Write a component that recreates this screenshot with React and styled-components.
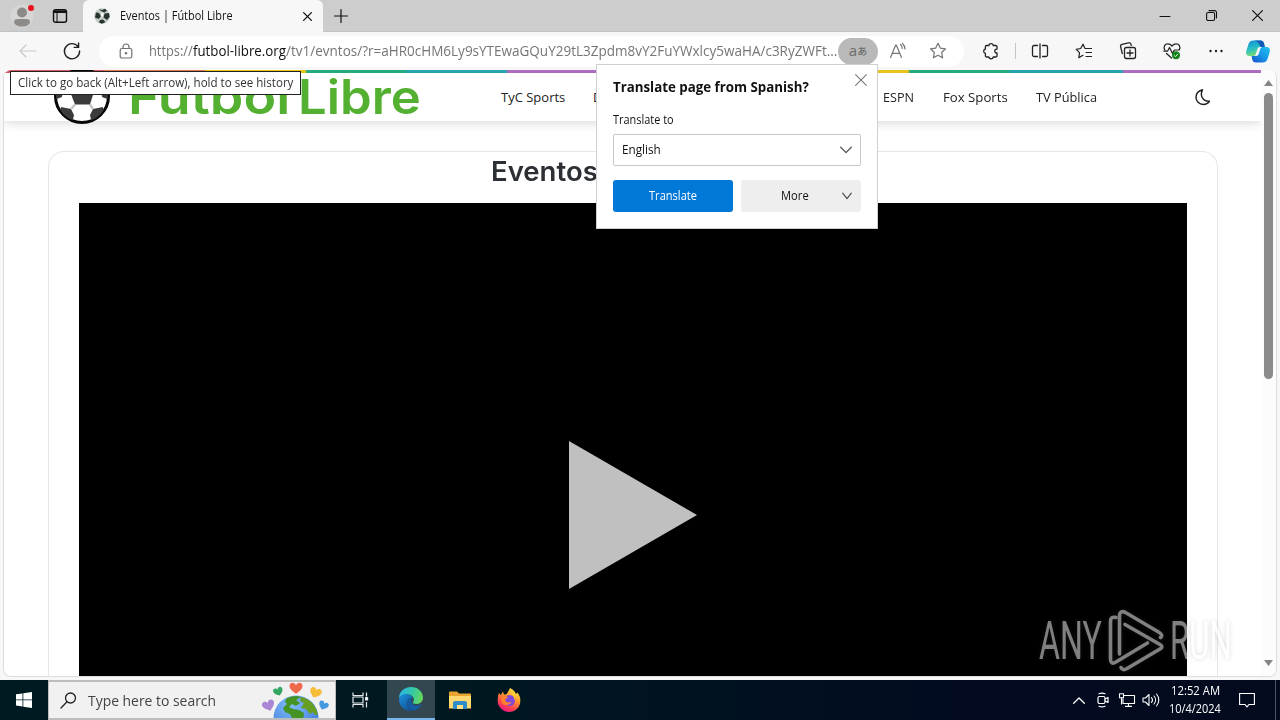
import React, { useLayoutEffect, useRef, useState } from "react";
import styled, { createGlobalStyle } from "styled-components";

const Global = createGlobalStyle`
  * { box-sizing: border-box; }
  html, body { margin: 0; padding: 0; overflow: hidden; }
  body { font-family: "Open Sans", "Noto Sans", sans-serif; font-size: 12px; color: #111; }
  svg { display: block; flex: none; overflow: visible; }
`;

/* ---------- text fitted to a set width ---------- */
const FitBox = styled.span`
  display: block;
  flex: none;
  width: ${(p) => p.$w}px;
  font-size: ${(p) => p.$size || 12}px;
  font-weight: ${(p) => p.$weight || 400};
  font-family: ${(p) => p.$family || "inherit"};
  color: ${(p) => p.$color || "inherit"};
  white-space: pre;
  line-height: 1.36;
`;
const FitInner = styled.span`
  display: inline-block;
  transform-origin: 0 50%;
`;
function Fit({ w, size, weight, family, color, children }) {
  const ref = useRef(null);
  const [scale, setScale] = useState(1);
  useLayoutEffect(() => {
    setScale(w / ref.current.offsetWidth);
  }, [w]);
  return (
    <FitBox $w={w} $size={size} $weight={weight} $family={family} $color={color}>
      <FitInner ref={ref} style={{ transform: `scaleX(${scale})` }}>{children}</FitInner>
    </FitBox>
  );
}

/* ---------- frame ---------- */
const Screen = styled.div`
  position: relative;
  width: 1280px;
  height: 720px;
  display: flex;
  flex-direction: column;
  background: #f7f7f7;
  overflow: hidden;
`;
const TitleBar = styled.div`
  height: 32px;
  flex: none;
  display: flex;
  background: #cdcdcd;
  border-bottom: 1px solid #c2c2c2;
`;
const Slot = styled.div`
  width: ${(p) => p.$w}px;
  height: 100%;
  flex: none;
  display: flex;
  align-items: center;
  justify-content: center;
`;
const Tab = styled.div`
  width: 240px;
  height: 32px;
  margin-left: 1px;
  flex: none;
  display: flex;
  align-items: center;
  padding: 0 11px 0 11px;
  background: #f7f7f7;
  border-radius: 6px 6px 0 0;
  gap: 10px;
`;
const Grow = styled.div`
  flex: 1;
`;
const ToolBar = styled.div`
  height: 38px;
  flex: none;
  display: flex;
  align-items: center;
  background: #f7f7f7;
  padding: 0 0 0 6px;
`;
const Address = styled.div`
  width: 865px;
  height: 31px;
  margin-left: 5px;
  flex: none;
  display: flex;
  align-items: center;
  border-radius: 16px;
  background: #fff;
  padding-left: 20px;
`;
const Url = styled.div`
  width: 689px;
  margin-left: 16px;
  display: flex;
  flex: none;
`;
const TranslatePill = styled.div`
  width: 40px;
  height: 27px;
  border-radius: 14px;
  background: #b9b9b9;
  color: #6c6c6c;
  display: flex;
  align-items: center;
  justify-content: center;
  flex: none;
  line-height: 20px;
`;
const Latin = styled.span`
  font-size: 15px;
  margin-top: -2px;
`;
const Kana = styled.span`
  font-family: "Noto Sans CJK JP", sans-serif;
  font-size: 10px;
  font-weight: 500;
`;
const Divider = styled.div`
  width: 1px;
  height: 16px;
  background: #c6c6c6;
`;

/* ---------- page ---------- */
const View = styled.div`
  width: 1274px;
  height: 607px;
  margin-left: 3px;
  flex: none;
  display: flex;
  background: #fff;
  border: 1px solid #dcdcdc;
  border-top: 0;
  border-radius: 8px;
  overflow: hidden;
`;
const Site = styled.div`
  width: 1257px;
  flex: none;
  display: flex;
  flex-direction: column;
`;
const Rainbow = styled.div`
  height: 3px;
  flex: none;
  background: linear-gradient(90deg,
    #dc5b66 0 100px, #e8785a 100px 200px, #ecca18 202px 301px, #27ae83 303px 400px, #2aa6b4 404px 502px,
    #b070c4 504px 603px, #dc5b66 605px 703px, #e8785a 705px 803px, #ecc719 806px 904px, #27ae83 906px 1003px,
    #2aa6b4 1008px 1118px, #b070c4 1120px);
`;
const SiteNav = styled.div`
  height: 48px;
  flex: none;
  display: flex;
  align-items: center;
  background: #fff;
  box-shadow: 0 3px 9px rgba(0, 0, 0, 0.13);
  padding-left: 49px;
`;
const Brand = styled.div`
  display: flex;
  width: 448px;
  height: 48px;
  flex: none;
  align-items: center;
`;
const BrandBall = styled.div`
  width: 75px;
  margin-top: -2px;
`;
const BrandWord = styled.div`
  width: ${(p) => p.$w}px;
`;
const Links = styled.div`
  display: flex;
  flex: none;
  width: 694px;
  padding-top: 2px;
`;
const Link = styled.div`
  width: ${(p) => p.$w}px;
`;
const Card = styled.div`
  width: 1170px;
  flex: 1;
  margin: 30px 0 0 44px;
  border: 1px solid #e6e6e6;
  border-bottom: 0;
  border-radius: 16px 16px 0 0;
  padding: 0 30px;
  display: flex;
  flex-direction: column;
`;
const Heading = styled.h1`
  height: 51px;
  margin: 0;
  padding: 1px 0 0 412px;
  flex: none;
`;
const Video = styled.div`
  flex: 1;
  background: #000;
  display: flex;
  padding: 238px 0 0 490px;
`;
const ScrollBar = styled.div`
  flex: 1;
  background: #fcfcfc;
  display: flex;
  flex-direction: column;
  align-items: center;
  padding-top: 10px;
`;
const Thumb = styled.div`
  width: 9px;
  height: 286px;
  border-radius: 5px;
  background: #8b8b8b;
  margin: 7px 0 281px;
`;

/* ---------- overlays ---------- */
const Tooltip = styled.div`
  position: absolute;
  left: 10px;
  top: 71px;
  width: 291px;
  height: 24px;
  border: 1px solid #222;
  background: #fff;
  padding: 3px 7px;
`;
const Popup = styled.div`
  position: absolute;
  left: 596px;
  top: 64px;
  width: 282px;
  height: 165px;
  border: 1px solid #cfcfcf;
  background: #fff;
  padding: 7px 16px 0;
  display: flex;
  flex-direction: column;
`;
const PopupHead = styled.div`
  display: flex;
  justify-content: space-between;
  height: 40px;
  svg { margin: 2px -6px 0 0; }
`;
const PopupTitle = styled.div`
  padding-top: 6px;
`;
const Select = styled.div`
  height: 32px;
  margin-top: 6px;
  border: 1px solid #c6c6c6;
  border-radius: 2px;
  padding: 0 8px;
  display: flex;
  align-items: center;
  justify-content: space-between;
`;
const Actions = styled.div`
  display: flex;
  gap: 8px;
  margin-top: 14px;
`;
const Action = styled.div`
  width: 120px;
  height: 32px;
  border-radius: 3px;
  display: flex;
  align-items: center;
  padding-left: ${(p) => p.$indent}px;
  gap: 33px;
  background: ${(p) => (p.$primary ? "#0078d8" : "#eee")};
  color: ${(p) => (p.$primary ? "#fff" : "#111")};
`;
const Watermark = styled.div`
  position: absolute;
  left: 1039px;
  top: 609px;
  height: 64px;
  display: flex;
  align-items: center;
  opacity: 0.5;
  filter: drop-shadow(0 0 2px rgba(90, 90, 90, 0.45));
`;

/* ---------- taskbar ---------- */
const TaskBar = styled.div`
  height: 40px;
  flex: none;
  margin-top: 3px;
  display: flex;
  align-items: center;
  color: #fff;
  background: linear-gradient(90deg, #001a22, #001820 35%, #020b20 75%, #030a1e);
`;
const Search = styled.div`
  width: 288px;
  height: 40px;
  flex: none;
  display: flex;
  align-items: center;
  background: #f1f1f1;
  border: 1px solid #bdbdbd;
  border-width: 2px 1px;
  color: #333;
  padding-left: 11px;
  overflow: hidden;
`;
const SearchText = styled.div`
  width: 172px;
  margin-left: 11px;
`;
const ActiveApp = styled(Slot)`
  background: #32474f;
  border-bottom: 2px solid #78b5ea;
`;
const Clock = styled.div`
  width: 64px;
  height: 40px;
  display: flex;
  flex: none;
  flex-direction: column;
  align-items: center;
  justify-content: center;
  gap: 2px;
`;
const ShowDesktop = styled.div`
  width: 5px;
  height: 40px;
  border-left: 1px solid #4a5265;
`;

/* ---------- icons ---------- */
const Stroke = ({ w = 20, h = 20, c = "#222", sw = 1.2, children }) => (
  <svg width={w} height={h} viewBox={`0 0 ${w} ${h}`} fill="none" stroke={c} strokeWidth={sw} strokeLinecap="round" strokeLinejoin="round">
    {children}
  </svg>
);
const Chevron = ({ w = 12, c = "#555" }) => (
  <Stroke w={w} h={8} c={c} sw={1.3}><path d={`M.7 1.2 ${w / 2} 6.6 ${w - 0.7} 1.2`} /></Stroke>
);

const Profile = () => (
  <svg width="26" height="26" viewBox="0 0 26 26">
    <circle cx="13" cy="13" r="11.5" fill="#d8d6d5" />
    <circle cx="13" cy="9.5" r="5" fill="#8d8a88" />
    <path d="M5 19c0-3 2-3 8-3s8 0 8 3c0 2.700-3.500 4.500-8 4.500S5 21.700 5 19" fill="#8d8a88" />
    <circle cx="22" cy="5" r="3" fill="#e8101c" />
  </svg>
);
const TabActions = () => (
  <Stroke w={16} h={16} c="#111" sw={1.4}>
    <rect x="1.500" y="1.800" width="13" height="12.500" rx="2" />
    <path d="M2 3.700h12" strokeWidth="2.600" strokeLinecap="butt" /><path d="M5 4v10" strokeWidth="1" />
  </Stroke>
);
const MiniBall = () => (
  <svg width="16" height="16" viewBox="0 0 16 16">
    <circle cx="8" cy="8" r="7.800" fill="#c5ccc8" />
    <path d="M5 1 8 2l3-1.300 2 1.800-2.500 2L7 3zM2 4.500 5 5l2 3.200L4.500 11 1 9.500zM10.500 5.500 15 5l.7 4-2.700 3-3.500-2.500zM6 12l3-.500 2.500 2.500L8 15.800 5 14.500z" fill="#27352f" />
    <path d="M7 5.500 9.500 5 9 8.500 7.500 9z" fill="#fff" />
  </svg>
);
const Ball = () => (
  <svg width="58" height="58" viewBox="0 0 58 58">
    <defs><clipPath id="ballClip"><circle cx="29" cy="29" r="26" /></clipPath></defs>
    <circle cx="29" cy="29" r="26.500" fill="#fff" stroke="#050505" strokeWidth="3" />
    <g clipPath="url(#ballClip)">
      <path d="M29 16 41 24.500 37 37.500H22L17 24.500z" fill="#3b3b3b" />
      <path d="M8 40 18 42 21 48 19 57 6 54zM50 40 40 42 37 48 39 57 52 54zM2 18 10 22 9 30 1 33zM56 18 48 22 49 30 57 33z" fill="#3b3b3b" />
      <path d="M22 37.500 18 42M37 37.500 40 42M10 27 17 24M48 27 41 24" stroke="#c6c6c6" strokeWidth="2.500" />
    </g>
  </svg>
);
const Back = () => <Stroke w={18} h={14} c="#cacaca"><path d="M17 7H1.500M7 1 1 7l6 6" /></Stroke>;
const Reload = () => (
  <Stroke w={18} h={18} c="#222" sw={1.4}><path d="M15.300 5A7.600 7.600 0 1 0 16.600 9M15.600 1v4.400h-4.400" /></Stroke>
);
const Lock = () => (
  <Stroke w={14} h={16} c="#707070" sw={1.2}>
    <rect x="1.200" y="5.500" width="11.600" height="9.500" rx="1.800" />
    <path d="M4 5.500V4a3 3 0 0 1 6 0v1.500" /><circle cx="7" cy="10.200" r=".7" fill="#707070" />
  </Stroke>
);
const ReadAloud = () => (
  <Stroke w={18} h={16} c="#747474" sw={1.2}>
    <path d="M1.500 14.500 6.700 2h.6l5.200 12.500M3.300 10.300h7.400M11.500 1.500a5 5 0 0 1 1.700 4M13.500.5A8 8 0 0 1 16 6" />
  </Stroke>
);
const starPath = "M9 1.300 11.300 6.100 16.500 6.800 12.700 10.500 13.600 15.800 9 13.300 4.400 15.800 5.300 10.500 1.500 6.800 6.700 6.100z";
const Star = () => <Stroke w={18} h={18} c="#747474"><path d={starPath} /></Stroke>;
const Puzzle = () => (
  <Stroke w={18} h={18} sw={1.300}>
    <path d="M4.600 3.500h2.200a2.300 2.300 0 0 1 4.500 0h2.500a1.200 1.200 0 0 1 1.200 1.200v2.500h-.3a1.900 1.900 0 0 0 0 3.800h.3v2.800a1.200 1.200 0 0 1-1.200 1.200h-2.500a2.300 2.300 0 0 1-4.500 0H4.600a1.200 1.200 0 0 1-1.200-1.200v-2.500a2.200 2.200 0 0 1 0-4.300V4.700a1.200 1.200 0 0 1 1.200-1.200z" />
  </Stroke>
);
const Split = () => (
  <Stroke w={18} h={16} sw={1.300}>
    <path d="M6.500 2.500H3A1.500 1.500 0 0 0 1.500 4v8A1.500 1.500 0 0 0 3 13.500h3.500M11.500 2.500H15A1.500 1.500 0 0 1 16.500 4v8a1.500 1.500 0 0 1-1.500 1.500h-3.500M9 1v14" />
  </Stroke>
);
const Favorites = () => (
  <Stroke w={18} h={16} sw={1.200}>
    <path d="M10 5.500 8 1.200 5.700 5.500 1.200 6.300 4.500 9.600 3.800 14.600 8 12.300M10 5.500h6.500M11 9.500h5.500M11 13.500h5.500" />
  </Stroke>
);
const Collections = () => (
  <Stroke w={18} h={18} sw={1.300}>
    <rect x="5.500" y="5.500" width="11" height="11" rx="2" />
    <path d="M11 8v6M8 11h6M3.300 11.500 1.600 4.700A2 2 0 0 1 3 2.300L9.500.8A2 2 0 0 1 12 2.300l.2 1" />
  </Stroke>
);
const Essentials = () => (
  <Stroke w={18} h={18} sw={1.200}>
    <path d="M1.800 8C0 4.500 2 1.800 4.800 1.800 6.800 1.800 8 2.800 9 4c1-1.200 2.200-2.200 4.200-2.200C16 1.800 18 4.500 16.200 8M1 9.200h3.500L6.500 5.500l3 6L11.300 8H16M3.500 11.500 8.500 16" />
    <circle cx="13" cy="13.300" r="4" fill="#15821c" stroke="none" /><path d="m11.200 13.500 1.300 1.200 2.300-2.600" stroke="#d8f5d8" strokeWidth="1" />
  </Stroke>
);
const Dots = () => (
  <svg width="16" height="4" viewBox="0 0 16 4" fill="#222"><circle cx="2.500" cy="2" r="1.200" /><circle cx="8" cy="2" r="1.200" /><circle cx="13.500" cy="2" r="1.200" /></svg>
);
const Copilot = () => (
  <svg width="24" height="23" viewBox="0 0 24 23">
    <defs>
      <linearGradient id="cpA" x1="0" y1="0" x2="0.300" y2="1"><stop stopColor="#148bd5" /><stop offset=".55" stopColor="#24bfc6" /><stop offset="1" stopColor="#76dc75" /></linearGradient>
      <linearGradient id="cpB" x1="1" y1="0" x2="0" y2="1"><stop stopColor="#23c2ee" /><stop offset=".5" stopColor="#1596e9" /><stop offset="1" stopColor="#1850c8" /></linearGradient>
    </defs>
    <path d="M17 7h3.500c3 0 4 2.500 3.200 5l-2.200 7c-.8 2.500-2.500 3.500-5 3.500H9.800c-2 0-3-1-3.500-3L5.600 16h4.200c2 0 2.700-1 3.200-3l1.300-4c.5-1.500 1.200-2 2.700-2z" fill="url(#cpB)" />
    <path d="M7.500.500h7c2 0 3 1 3.600 3l.7 3.500h-4.500c-1.700 0-2.500.8-3 2.500L9.800 14c-.4 1.500-1.200 2-2.500 2H3.600C.5 16-.5 13.500.3 11L2.500 4C3.300 1.500 5 .500 7.500.500z" fill="url(#cpA)" />
    <path d="M8 .5h6.500c2 0 3 1 3.600 3l.7 3.500h-3.500C13.500 7 13.500 1 8 .5z" fill="#1459b8" />
  </svg>
);
const Close = ({ s = 10, c = "#111", sw = 1.2 }) => <Stroke w={s} h={s} c={c} sw={sw}><path d={`M.6.6 ${s - 0.6} ${s - 0.6}M${s - 0.6} .6.6 ${s - 0.6}`} /></Stroke>;
const Moon = () => (
  <Stroke w={16} h={17} c="#1d1d22" sw={1.4}><path d="M7.500.8C3 2 1 5 1 8.200A7.200 7.200 0 0 0 8.200 15.500c2.800 0 5-1.300 6.300-3.400C8 12.800 4.500 6.500 7.500.8z" /></Stroke>
);

const WinLogo = () => (
  <svg width="16" height="16" viewBox="0 0 16 16" fill="#fff"><path d="M0 2.300 6.500 1.400v6.100H0zM7.300 1.300 16 0v7.500H7.300zM0 8.300h6.500v6.200L0 13.600zM7.300 8.300H16V16l-8.700-1.300z" /></svg>
);
const heart = "M0 2.500C-1-1.500-6.500-1-6.500 3c0 3.300 3.500 5.500 6.500 7.800C3 8.500 6.500 6.300 6.500 3 6.500-1 1-1.500 0 2.500z";
const Earth = () => (
  <svg width="74" height="38" viewBox="0 0 74 38">
    <defs>
      <radialGradient id="sea" cx=".4" cy=".2" r=".8"><stop stopColor="#80bdfb" /><stop offset="1" stopColor="#3b75d9" /></radialGradient>
      <clipPath id="globe"><circle cx="36" cy="37" r="22" /></clipPath>
    </defs>
    <circle cx="36" cy="37" r="22.500" fill="url(#sea)" />
    <g clipPath="url(#globe)">
      <path d="M26 18c5-4 12-4 15-2l-5 3 4 3-4 3-4-2-3 3 4 2 6 1 5 3-1 7H33l-3-6-5-2-2-4 4-4-2-2z" fill="#449323" />
      <path d="M41 16c10 1 17 9 17 18h-3l-2-3-3 2-4-5-5-1 3-5-4-2z" fill="#679d22" />
    </g>
    <path d={heart} transform="translate(36,2)" fill="#ee6a4b" />
    <path d={heart} transform="translate(17,7) rotate(-20) scale(.75)" fill="#33a75f" />
    <path d={heart} transform="translate(57,7.500) rotate(20) scale(.9)" fill="#f5bd37" />
    <path d={heart} transform="translate(7,20) rotate(-20) scale(.95)" fill="#aa86d4" />
    <path d={heart} transform="translate(65,21) rotate(24) scale(.76)" fill="#4599df" />
  </svg>
);
const TaskView = () => (
  <Stroke w={18} h={18} c="#e6eaed" sw={1.2}><path d="M2 1.500v3h10v-3M2 16.500v-3h10v3M2 6h10v6H2zM15.500 1.500v4M15.500 11v5.500" strokeLinecap="butt" /><rect x="14.600" y="6.500" width="2" height="2.500" fill="#fff" /></Stroke>
);
const EdgeLogo = () => (
  <svg width="24" height="24" viewBox="0 0 24 24">
    <defs>
      <linearGradient id="edTop" x1="0" y1=".3" x2="1" y2=".5"><stop stopColor="#2bb4e8" /><stop offset=".55" stopColor="#35c9a5" /><stop offset="1" stopColor="#66d75a" /></linearGradient>
      <linearGradient id="edBottom" x1="0" y1="0" x2=".8" y2="1"><stop stopColor="#1994df" /><stop offset="1" stopColor="#124b90" /></linearGradient>
    </defs>
    <path d="M0 11C0 5 5 0 12 0s12 5 12 10.500c0 4-3 6.500-6.500 6.500-3 0-4.300-1-3.300-2.300C16 12 14 8 9.500 7.500 5 7 1.500 8.500 0 11z" fill="url(#edTop)" />
    <path d="M0 12C1 8 5 6.500 9 7.200c2 .4 4.500 2 5 4.300-2-1-6 0-6 4.500 0 4 3.500 7.500 7.500 7.200C7 26 0 20 0 12z" fill="url(#edBottom)" />
    <path d="M8 16c0-3 2-5 5-5-1.800 3 .2 8 5.500 7.500 1.500-.1 3-.7 4-1.300.6-.2.6.2.4.6C20 22 17 23.500 14.500 23.300 11 23 8 19.500 8 16z" fill="#145b9f" />
  </svg>
);
const Folder = () => (
  <svg width="22" height="19" viewBox="0 0 22 19">
    <path d="M0 1.500Q0 .5 1 .5h7l2 2h11q1 0 1 1v4H0z" fill="#e9a52f" /><path d="M0 5h22v12.500H0z" fill="#ffd871" />
    <path d="M4 18v-6q0-2 2-2h10q2 0 2 2v6h-4v-4H8v4z" fill="#2e8cc8" /><path d="M8 14h6v4H8z" fill="#ffe08a" />
  </svg>
);
const Firefox = () => (
  <svg width="24" height="24" viewBox="0 0 24 24">
    <defs><linearGradient id="ff" x1=".8" y1="0" x2=".3" y2="1"><stop stopColor="#fff04a" /><stop offset=".4" stopColor="#ff9a2c" /><stop offset=".75" stopColor="#ff4050" /><stop offset="1" stopColor="#e31587" /></linearGradient></defs>
    <path d="M2 5 3.800 7 6 3.500l1 3 2.500-.3C10 5 12 3 13 0c4 2 5 4 6 6l1.300-1.500C23 8 23.500 10 23.300 13.500 23 19.500 18 24 12 24S.7 19 .7 13C.7 9.500 1 7.500 2 5z" fill="url(#ff)" />
    <circle cx="12.500" cy="12.500" r="5.500" fill="#8147d8" /><path d="M4 9c3-2 5.500-1.500 7 .5L8.500 11c-1 3 3 4.500 6 2.500-1 4-7 5-9.500 1.500z" fill="#ff8130" /><path d="M12.500 4c3 1.500 5 4 4.500 8 2-2 2-6-.5-9z" fill="#ffce38" />
  </svg>
);
const TrayUp = () => <Stroke w={12} h={7} c="#fff" sw={1.3}><path d="M.7 6.200 6 1l5.300 5.200" /></Stroke>;
const TrayCam = () => (
  <Stroke w={14} h={16} c="#fff" sw={1.2}><rect x="2" y="4.500" width="7" height="7" rx="1.500" /><path d="m9 7 3-1.500v5L9 9M3 1.700a8 8 0 0 1 6 0M3 14.300a8 8 0 0 0 6 0" /></Stroke>
);
const TrayNet = () => (
  <Stroke w={16} h={14} c="#fff" sw={1.1}><path d="M5 2.500h10.500v8H4V6M9.500 10.500v2.700M6.500 13.400h6M.5.700h4v4h-4zM2.500 4.700V11" /></Stroke>
);
const TrayVol = () => (
  <Stroke w={18} h={14} c="#fff" sw={1.1}><path d="M1 5h2.500L7 1.500v11L3.500 9H1zM9.500 4.500a4 4 0 0 1 0 5M12 3a6 6 0 0 1 0 8M14.500 1a9 9 0 0 1 0 12" /></Stroke>
);
const Notice = () => <Stroke w={16} h={16} c="#fff" sw={1.1}><path d="M.6 1.500h14.800v11H10L8 14.800 6 12.500H.6z" strokeLinejoin="miter" /></Stroke>;
const WatermarkPlay = () => (
  <Stroke w={56} h={64} c="#fff" sw={3.6}>
    <path d="M8 8.500C4 7.500 2.500 9 2.500 13v37c0 4 2 5 5 3.300L39.500 34" />
    <path d="M11.500 45V7c0-4 2.500-5.500 6-3.500L50.500 23c3.500 2 4 4 2 5.500" />
    <path d="M17 15.500 52 35.500c2.500 1.500 2.500 3 0 4.500L19 59.500c-3 1.700-5 1.500-6-1" />
  </Stroke>
);

const condensed = '"Roboto", sans-serif';
const display = '"Inter", sans-serif';

export default function App() {
  return (
    <Screen>
      <Global />
      <TitleBar>
        <Slot $w={44}><Profile /></Slot>
        <Slot $w={32}><TabActions /></Slot>
        <Slot $w={6} />
        <Tab>
          <MiniBall />
          <Fit w={113} size={12}>Eventos | Fútbol Libre</Fit>
          <Grow />
          <Close s={9} sw={1.3} />
        </Tab>
        <Slot $w={35}><Stroke w={14} h={14} c="#111" sw={1.2}><path d="M7 .5v13M.5 7h13" /></Stroke></Slot>
        <Grow />
        <Slot $w={46}><Stroke w={10} h={2} c="#111" sw={1}><path d="M0 1.500h10" /></Stroke></Slot>
        <Slot $w={46}><Stroke w={11} h={11} c="#111" sw={1.1}><rect x=".6" y="2.500" width="8" height="8" rx="1.500" /><path d="M3 .6h5.500a2 2 0 0 1 2 2V8" /></Stroke></Slot>
        <Slot $w={46}><Close s={11} /></Slot>
      </TitleBar>
      <ToolBar>
        <Slot $w={44}><Back /></Slot>
        <Slot $w={44}><Reload /></Slot>
        <Address>
          <Lock />
          <Url>
            <Fit w={44} size={14} color="#757575">https://</Fit>
            <Fit w={93} size={14} color="#111">futbol-libre.org</Fit>
            <Fit w={551} size={14} color="#757575">/tv1/evntos/?r=aHR0cHM6Ly9sYTEwaGQuY29tL3Zpdm8vY2FuYWxlcy5waHA/c3RyZWFt...</Fit>
          </Url>
          <TranslatePill><Latin>a</Latin><Kana>あ</Kana></TranslatePill>
          <Slot $w={40}><ReadAloud /></Slot>
          <Slot $w={40}><Star /></Slot>
        </Address>
        <Slot $w={5} />
        <Slot $w={44}><Puzzle /></Slot>
        <Slot $w={5}><Divider /></Slot>
        <Slot $w={44}><Split /></Slot>
        <Slot $w={44}><Favorites /></Slot>
        <Slot $w={44}><Collections /></Slot>
        <Slot $w={44}><Essentials /></Slot>
        <Slot $w={44}><Dots /></Slot>
        <Slot $w={40}><Copilot /></Slot>
      </ToolBar>

      <View>
        <Site>
          <Rainbow />
          <SiteNav>
            <Brand>
              <BrandBall><Ball /></BrandBall>
              <BrandWord $w={170}><Fit w={162} size={47.5} weight={600} family={display} color="#54b031">Fútbol</Fit></BrandWord>
              <BrandWord $w={123}><Fit w={123} size={47.5} weight={600} family={display} color="#54b031">Libre</Fit></BrandWord>
            </Brand>
            <Links>
              <Link $w={92}><Fit w={64} size={13} color="#222">TyC Sports</Fit></Link>
              <Link $w={290}><Fit w={9} size={13} color="#222">D</Fit></Link>
              <Link $w={60}><Fit w={31} size={13} color="#222">ESPN</Fit></Link>
              <Link $w={93}><Fit w={65} size={13} color="#222">Fox Sports</Fit></Link>
              <Link $w={61}><Fit w={61} size={13} color="#222">TV Pública</Fit></Link>
            </Links>
            <Moon />
          </SiteNav>
          <Card>
            <Heading><Fit w={107} size={26.5} weight={600} family={display} color="#2c2f34">Eventos</Fit></Heading>
            <Video>
              <svg width="128" height="148" viewBox="0 0 128 148"><path d="M0 0 128 74 0 148z" fill="#c0c0c0" /></svg>
            </Video>
          </Card>
        </Site>
        <ScrollBar>
          <svg width="9" height="6" viewBox="0 0 9 6"><path d="M4.500 0 9 6H0z" fill="#858585" /></svg>
          <Thumb />
          <svg width="9" height="6" viewBox="0 0 9 6"><path d="M0 0h9L4.500 6z" fill="#858585" /></svg>
        </ScrollBar>
      </View>

      <TaskBar>
        <Slot $w={48}><WinLogo /></Slot>
        <Search>
          <Stroke w={17} h={17} c="#222" sw={1.3}><circle cx="10.500" cy="6" r="5" /><path d="M7 9.700 1 16" /></Stroke>
          <SearchText><Fit w={128} size={15} color="#444">Type here to search</Fit></SearchText>
          <Earth />
        </Search>
        <Slot $w={48}><TaskView /></Slot>
        <Slot $w={3} />
        <ActiveApp $w={48}><EdgeLogo /></ActiveApp>
        <Slot $w={49}><Folder /></Slot>
        <Slot $w={49}><Firefox /></Slot>
        <Grow />
        <Slot $w={24}><TrayUp /></Slot>
        <Slot $w={24}><TrayCam /></Slot>
        <Slot $w={24}><TrayNet /></Slot>
        <Slot $w={24}><TrayVol /></Slot>
        <Clock>
          <Fit w={49} size={12}>12:52 AM</Fit>
          <Fit w={52} size={12}>10/4/2024</Fit>
        </Clock>
        <Slot $w={40}><Notice /></Slot>
        <Slot $w={8} />
        <ShowDesktop />
      </TaskBar>

      <Watermark>
        <Fit w={63} size={53} weight={400} family={condensed} color="#fff">ANY</Fit>
        <Slot $w={68}><WatermarkPlay /></Slot>
        <Fit w={62} size={53} weight={400} family={condensed} color="#fff">RUN</Fit>
      </Watermark>

      <Tooltip><Fit w={275} size={12} color="#333">Click to go back (Alt+Left arrow), hold to see history</Fit></Tooltip>

      <Popup>
        <PopupHead>
          <PopupTitle><Fit w={196} size={13.5} weight={700}>Translate page from Spanish?</Fit></PopupTitle>
          <Close s={12} c="#777" sw={1.1} />
        </PopupHead>
        <Fit w={61} size={12}>Translate to</Fit>
        <Select>
          <Fit w={39} size={12}>English</Fit>
          <Chevron w={12} />
        </Select>
        <Actions>
          <Action $primary $indent={36}><Fit w={48} size={12}>Translate</Fit></Action>
          <Action $indent={40}><Fit w={28} size={12}>More</Fit><Chevron w={10} /></Action>
        </Actions>
      </Popup>
    </Screen>
  );
}
